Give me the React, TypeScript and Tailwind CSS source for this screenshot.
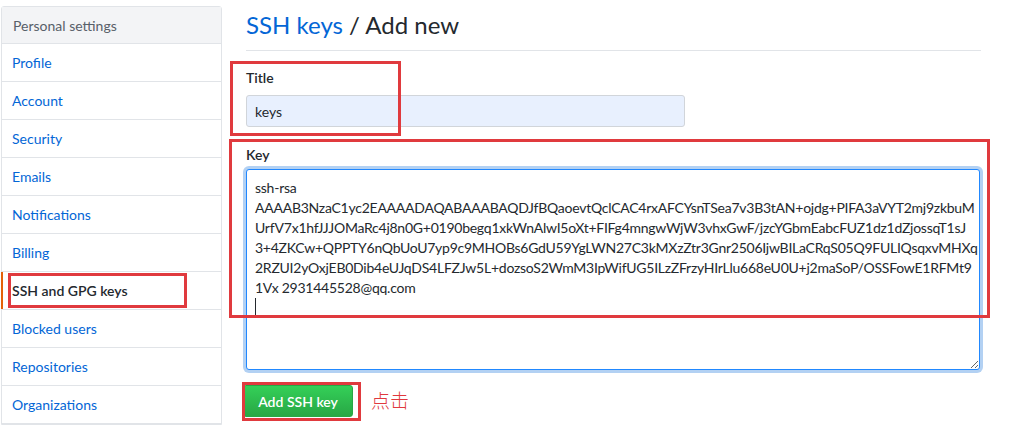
import React from 'react'

const font = { fontFamily: 'Lato, "Noto Sans CJK SC", sans-serif' }

const navItems = [
  'Profile',
  'Account',
  'Security',
  'Emails',
  'Notifications',
  'Billing',
  'SSH and GPG keys',
  'Blocked users',
  'Repositories',
  'Organizations',
]

const keyText = [
  'ssh-rsa',
  'AAAAB3NzaC1yc2EAAAADAQABAAABAQDJfBQaoevtQclCAC4rxAFCYsnTSea7v3B3tAN+ojdg+PIFA3aVYT2mj9zkbuM',
  'UrfV7x1hfJJJOMaRc4j8n0G+0190begq1xkWnAlwI5oXt+FIFg4mngwWjW3vhxGwF/jzcYGbmEabcFUZ1dz1dZjossqT1sJ',
  '3+4ZKCw+QPPTY6nQbUoU7yp9c9MHOBs6GdU59YgLWN27C3kMXzZtr3Gnr2506IjwBILaCRqS05Q9FULIQsqxvMHXq',
  '2RZUI2yOxjEB0Dib4eUJqDS4LFZJw5L+dozsoS2WmM3IpWifUG5ILzZFrzyHIrLlu668eU0U+j2maSoP/OSSFowE1RFMt9',
  '1Vx 2931445528@qq.com',
].join('\n')

function Sidebar() {
  return (
    <nav className="w-[221px] shrink-0 border border-[#e1e4e8] rounded-t-[3px] bg-white">
      <div className="h-[37px] flex items-center px-[11px] bg-[#f3f4f6] border-b border-[#e1e4e8] text-[14px] text-[#586069]">
        Personal settings
      </div>
      {navItems.map((label) => {
        const active = label === 'SSH and GPG keys'
        return (
          <div
            key={label}
            className={
              active
                ? 'h-[38px] flex items-center pr-[10px] border-b border-[#e1e4e8] text-[14px] font-semibold text-[#24292e]'
                : 'h-[38px] flex items-center px-[10px] border-b border-[#e1e4e8] text-[14px] text-[#0366d6]'
            }
          >
            {active && <span className="w-[2px] h-full ml-[-1px] mr-[9px] bg-[#e36209]" />}
            {label}
          </div>
        )
      })}
    </nav>
  )
}

export default function App() {
  return (
    <div className="relative w-[1015px] h-[425px] overflow-hidden bg-white pt-[6px] pl-[1px]" style={font}>
      <div className="flex items-start gap-[24px]">
        <Sidebar />

        <main className="w-[735px]">
          <h2 className="mt-[4px] pb-[10px] border-b border-[#e1e4e8] text-[24px] leading-[30px] font-normal text-[#24292e]">
            <span className="text-[#0366d6]">SSH keys</span> / Add new
          </h2>

          <label className="block mt-[16px] mb-[7px] text-[14px] leading-[21px] font-semibold text-[#24292e]">
            Title
          </label>
          <input
            defaultValue="keys"
            className="block w-[439px] h-[32px] px-[8px] rounded-[3px] border border-[#d1d5da] bg-[#e8f0fe] text-[14px] text-[#24292e] outline-none"
            style={font}
          />

          <label className="block mt-[17px] mb-[4px] text-[14px] leading-[21px] font-semibold text-[#24292e]">
            Key
          </label>
          <div className="relative">
            <textarea
              defaultValue={keyText}
              wrap="off"
              className="block w-[734px] h-[201px] px-[8px] py-[8px] rounded-[3px] border border-[#2188ff] bg-white text-[14px] leading-[20px] tracking-[-0.25px] text-[#24292e] outline-none overflow-hidden whitespace-pre shadow-[0_0_0_3px_rgba(3,102,214,0.3)]"
              style={font}
            />
            {/* caret */}
            <span className="absolute left-[9px] top-[129px] w-[1px] h-[18px] bg-[#24292e]" />
          </div>

          <div className="mt-[15px] flex items-center gap-[18px]">
            <button className="h-[32px] w-[110px] ml-[-3px] rounded-[3px] border border-[#28a745] bg-gradient-to-b from-[#34d058] to-[#28a745] text-[14px] font-semibold text-white">
              Add SSH key
            </button>
            <span className="text-[19px] font-light text-[#e0393e]">点击</span>
          </div>
        </main>
      </div>

      {/* red annotation boxes */}
      <div className="absolute left-[8px] top-[273px] w-[179px] h-[35px] border-[3px] border-[#e03a3e]" />
      <div className="absolute left-[230px] top-[61px] w-[171px] h-[75px] border-[3px] border-[#e03a3e]" />
      <div className="absolute left-[229px] top-[139px] w-[761px] h-[179px] border-[3px] border-[#e03a3e]" />
      <div className="absolute left-[242px] top-[382px] w-[119px] h-[39px] border-[3px] border-[#e03a3e]" />
    </div>
  )
}
